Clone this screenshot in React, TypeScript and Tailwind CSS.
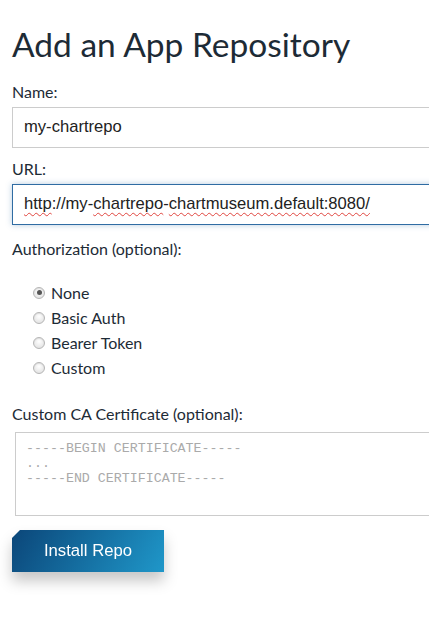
import React from "react";

const sans = { fontFamily: "Lato, 'Open Sans', sans-serif" };

function Radio({ label, checked }: { label: string; checked?: boolean }) {
  return (
    <div className="flex items-center h-[25px]">
      <span className="w-[12px] h-[12px] rounded-full border border-[#b5b5b5] bg-[radial-gradient(circle_at_50%_35%,#ffffff,#dcdcdc)] flex items-center justify-center shadow-[inset_0_1px_1px_rgba(0,0,0,0.08)]">
        {checked && <span className="w-[5px] h-[5px] rounded-full bg-[#555]" />}
      </span>
      <span className="ml-[6px] text-[16px] text-[#1d2b36]">{label}</span>
    </div>
  );
}

const Squig = ({ children }: { children: React.ReactNode }) => (
  <span className="underline decoration-wavy decoration-[#e0453f] decoration-[1px] underline-offset-[3px]">{children}</span>
);

export default function App() {
  return (
    <div className="w-[429px] h-[628px] overflow-hidden bg-white" style={sans}>
      <div className="pl-3 text-[#1d2b36]">
        <h1 className="pt-[24px] text-[33.5px] leading-[40px] font-normal">Add an App Repository</h1>
        <div className="mt-[18px] text-[16px] leading-[20px]">Name:</div>
        <div className="mt-[5px] h-[41px] w-[440px] border border-[#cccccc] flex items-center pl-[11px] text-[16.6px] text-[#222]" style={{ fontFamily: "'Liberation Sans', Arial, sans-serif" }}>
          my-chartrepo
        </div>
        <div className="mt-[11px] text-[16px] leading-[20px]">URL:</div>
        <div className="mt-[5px] h-[41px] w-[440px] border border-[#2f6ca3] shadow-[0_0_6px_rgba(47,108,163,0.35)] flex items-center pl-[11px] text-[16.6px] text-[#222]" style={{ fontFamily: "'Liberation Sans', Arial, sans-serif" }}>
          <span>
            <Squig>http</Squig>://my-<Squig>chartrepo</Squig>-<Squig>chartmuseum.default:8080/</Squig>
          </span>
        </div>
        <div className="mt-[14px] text-[16px] leading-[20px]">Authorization (optional):</div>
        <div className="mt-[21px] pl-[21px]">
          <Radio label="None" checked />
          <Radio label="Basic Auth" />
          <Radio label="Bearer Token" />
          <Radio label="Custom" />
        </div>
        <div className="mt-[24px] text-[16px] leading-[20px]">Custom CA Certificate (optional):</div>
        <div className="mt-[8px] ml-[3px] h-[84px] w-[440px] border border-[#cccccc] pl-[10px] pt-[8px] text-[13.3px] leading-[15px] text-[#aaaaaa] whitespace-pre" style={{ fontFamily: "'Liberation Mono', 'DejaVu Sans Mono', monospace" }}>
          {"-----BEGIN CERTIFICATE-----\n...\n-----END CERTIFICATE-----"}
        </div>
        <div className="mt-[14px] w-[152px] drop-shadow-[0_9px_7px_rgba(0,0,0,0.22)]">
          <div className="h-[42px] flex items-center justify-center text-white text-[16.7px] bg-[linear-gradient(120deg,#0b4679,#1f97c9)] [clip-path:polygon(8px_0,100%_0,100%_100%,0_100%,0_8px)]" style={{ fontFamily: "'Liberation Sans', Arial, sans-serif" }}>
            Install Repo
          </div>
        </div>
      </div>
    </div>
  );
}
